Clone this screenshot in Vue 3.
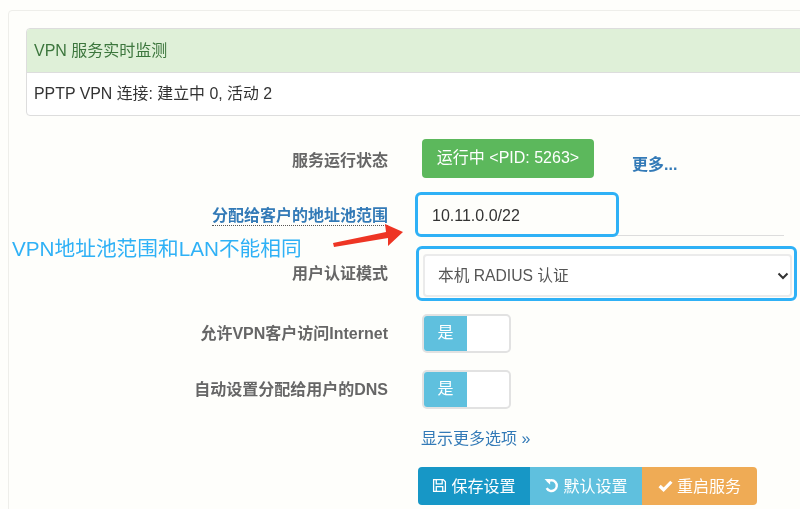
<script setup>
const toggles = [
  { label: '允许VPN客户访问Internet' },
  { label: '自动设置分配给用户的DNS' }
]
</script>

<template>
  <div class="page">
    <div class="well">
      <section class="panel">
        <h3 class="panel-title">VPN 服务实时监测</h3>
        <p class="panel-body">PPTP VPN 连接: 建立中 0, 活动 2</p>
      </section>

      <div class="row status-row">
        <span class="label">服务运行状态</span>
        <div class="control status-control">
          <span class="status">运行中 &lt;PID: 5263&gt;</span>
          <a class="more">更多...</a>
        </div>
      </div>

      <div class="row pool-row">
        <span class="label"><span class="hint">分配给客户的地址池范围</span></span>
        <div class="control pool-control">
          <input class="pool-input" value="10.11.0.0/22" />
          <span class="mark mark-pool"></span>
        </div>
      </div>

      <div class="row auth-row">
        <span class="label raised">用户认证模式</span>
        <div class="control auth-control">
          <select class="auth-select">
            <option>本机 RADIUS 认证</option>
          </select>
          <svg class="chevron" viewBox="0 0 12 8" width="12" height="8">
            <path d="M1.500 1.500 6 6l4.500-4.500" fill="none" stroke="#333" stroke-width="2" />
          </svg>
          <span class="mark mark-auth"></span>
        </div>
      </div>

      <div v-for="t in toggles" :key="t.label" class="row toggle-row">
        <span class="label lifted">{{ t.label }}</span>
        <div class="control">
          <div class="switch">
            <span class="switch-on">是</span>
            <span class="switch-off"></span>
          </div>
        </div>
      </div>

      <div class="row link-row">
        <span></span>
        <a class="show-more">显示更多选项 »</a>
      </div>

      <div class="actions">
        <button class="btn btn-save">
          <svg viewBox="0 0 14 14" width="15" height="15">
            <path d="M1.500 1.500h9l2 2v9h-11z M4 1.500v4h5.500v-4 M4 12.500v-4.500h6v4.500" fill="none" stroke="#fff" stroke-width="1.200" />
          </svg>
          保存设置
        </button>
        <button class="btn btn-reset">
          <svg viewBox="0 0 14 14" width="15" height="15">
            <path d="M3.200 3.800A5 5 0 1 1 2.500 9.500" fill="none" stroke="#fff" stroke-width="2.200" />
            <path d="M0.500 1h5.200v5.200z" fill="#fff" />
          </svg>
          默认设置
        </button>
        <button class="btn btn-restart">
          <svg viewBox="0 0 14 14" width="15" height="15">
            <path d="M1.500 7.500 5.200 11 12.500 3.500" fill="none" stroke="#fff" stroke-width="3" />
          </svg>
          重启服务
        </button>
      </div>
    </div>

    <span class="note">VPN地址池范围和LAN不能相同</span>
    <svg class="arrow" viewBox="0 0 72 26" width="72" height="26">
      <path d="M0 21 53 10 52 2 70 10 55 24 55 16 1 25z" fill="#ee3524" />
    </svg>
  </div>
</template>

<style>
html,
body {
  margin: 0;
  background: #fefefb;
}
</style>

<style scoped>
.page {
  position: relative;
  width: 800px;
  height: 509px;
  overflow: hidden;
  background: #fefefb;
  color: #333;
  font-family: "Liberation Sans", "Noto Sans CJK SC", sans-serif;
  font-size: 16px;
  filter: blur(0.5px);
}

.well {
  margin: 10px -30px 0 8px;
  padding: 17px 0 0;
  border: 1px solid #eeeeea;
  border-radius: 4px;
  height: 520px;
  box-sizing: border-box;
}

.panel {
  margin: 0 0 0 17px;
  border: 1px solid #ddd;
  border-radius: 4px;
  background: #fff;
  overflow: hidden;
}

.panel-title {
  margin: 0;
  padding: 0 7px;
  height: 43px;
  line-height: 43px;
  font-size: 16px;
  font-weight: 400;
  color: #3c763d;
  background: #dff0d8;
  border-bottom: 1px solid #ddd;
}

.panel-body {
  margin: 0;
  padding: 0 7px;
  height: 42px;
  line-height: 42px;
  font-size: 15.900px;
}

.row {
  display: grid;
  grid-template-columns: 379px 1fr;
  column-gap: 34px;
  align-items: center;
}

.label {
  text-align: right;
  font-size: 16px;
  font-weight: 700;
  color: #666;
}

.raised {
  padding-bottom: 8px;
}

.lifted {
  padding-bottom: 4px;
}

.status-row {
  margin-top: 23px;
  height: 39px;
}

.status-control {
  display: flex;
  align-items: center;
  gap: 38px;
}

.status {
  display: block;
  width: 172px;
  height: 39px;
  line-height: 37px;
  text-align: center;
  border-radius: 4px;
  background: #5cb85c;
  color: #fff;
  font-size: 16px;
}

.more {
  margin-top: 9px;
  font-size: 16px;
  font-weight: 700;
  color: #337ab7;
}

.pool-row {
  margin-top: 14px;
  height: 44px;
}

.hint {
  color: #337ab7;
  border-bottom: 1px dotted #555;
  padding-bottom: 1px;
}

.pool-control,
.auth-control {
  position: relative;
  height: 100%;
}

.pool-input {
  display: block;
  width: 362px;
  height: 44px;
  margin: 0;
  padding: 4px 0 0 10px;
  box-sizing: border-box;
  border: 0;
  border-bottom: 1px solid #ddd;
  background: transparent;
  outline: none;
  font: 16px "Liberation Sans", sans-serif;
  color: #333;
}

.mark {
  position: absolute;
  box-sizing: border-box;
  border: 3px solid #2fb1f6;
  border-radius: 6px;
  pointer-events: none;
}

.mark-pool {
  left: -7px;
  top: 0;
  width: 204px;
  height: 45px;
}

.auth-row {
  margin-top: 18px;
  height: 43px;
}

.auth-select {
  display: block;
  width: 369px;
  height: 43px;
  margin-left: 1px;
  padding: 0 0 0 13px;
  box-sizing: border-box;
  appearance: none;
  border: 2px solid #ebebeb;
  border-radius: 4px;
  background: #fff;
  font: 15.700px "Liberation Sans", "Noto Sans CJK SC", sans-serif;
  color: #555;
}

.chevron {
  position: absolute;
  left: 355px;
  top: 18px;
}

.mark-auth {
  left: -6px;
  top: -8px;
  width: 381px;
  height: 55px;
}

.toggle-row {
  height: 39px;
}

.auth-row + .toggle-row {
  margin-top: 17px;
}

.toggle-row + .toggle-row {
  margin-top: 17px;
}

.switch {
  display: flex;
  width: 89px;
  height: 39px;
  box-sizing: border-box;
  border: 2px solid #e2e2e2;
  border-radius: 5px;
  overflow: hidden;
  background: #fff;
}

.switch-on {
  width: 43px;
  line-height: 34px;
  text-align: center;
  background: #5fc0de;
  color: #fff;
  font-size: 16px;
}

.switch-off {
  flex: 1;
}

.link-row {
  margin-top: 16px;
  height: 22px;
}

.show-more {
  margin-left: -1px;
  font-size: 16px;
  color: #337ab7;
}

.actions {
  display: flex;
  margin: 20px 0 0 409px;
}

.btn {
  display: flex;
  align-items: center;
  justify-content: center;
  gap: 4px;
  height: 38px;
  padding: 0 0 2px;
  box-sizing: border-box;
  border: 0;
  color: #fff;
  font: 16px "Liberation Sans", "Noto Sans CJK SC", sans-serif;
}

.btn-save {
  width: 112px;
  background: #1797c6;
  border-radius: 4px 0 0 4px;
}

.btn-reset {
  width: 112px;
  background: #5fc0de;
}

.btn-restart {
  width: 115px;
  background: #efab55;
  border-radius: 0 4px 4px 0;
}

.note {
  position: absolute;
  left: 12px;
  top: 236px;
  font-size: 20.700px;
  line-height: 25px;
  color: #2fb1f6;
}

.arrow {
  position: absolute;
  left: 333px;
  top: 222px;
}
</style>
